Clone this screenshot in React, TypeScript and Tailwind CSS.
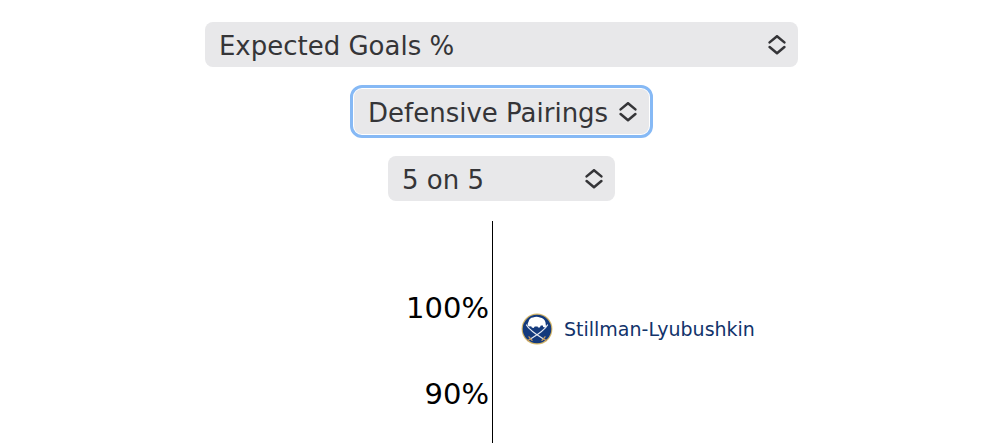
import { useState } from 'react';

type FilterProps = {
    label: string;
    options: string[];
    className: string;
};

const metrics = ['Expected Goals %', 'Goals %', 'Shot Attempts %'];
const groups = ['Defensive Pairings', 'Forward Lines'];
const strengths = ['5 on 5', 'All Situations'];
const ticks = ['100%', '90%'];

function Filter({ label, options, className }: FilterProps) {
    const [value, setValue] = useState(options[0]);

    return (
        <div className={`relative rounded-lg bg-[#e8e8ea] ${className}`}>
            <select
                aria-label={label}
                value={value}
                onChange={(e) => setValue(e.target.value)}
                className="block w-full h-[45px] pt-1 pl-[14px] pr-8 appearance-none rounded-lg bg-transparent text-[26px] text-[#353538] outline-none cursor-pointer"
            >
                {options.map((option) => (
                    <option key={option}>{option}</option>
                ))}
            </select>
            <svg
                viewBox="0 0 18 20"
                className="absolute right-3 top-[13px] w-[18px] h-5 pointer-events-none"
                fill="none"
                stroke="#353538"
                strokeWidth="2.5"
                strokeLinecap="round"
                strokeLinejoin="round"
            >
                <path d="M1.6 7.4 9 1.2l7.4 6.2M1.6 12 9 18.2l7.4-6.2" />
            </svg>
        </div>
    );
}

function SabresLogo() {
    return (
        <svg viewBox="0 0 32 32" className="w-8 h-8 shrink-0" aria-hidden="true">
            <circle cx="16" cy="16" r="15.4" fill="#d3b568" />
            <circle cx="16" cy="16" r="14.3" fill="#143a7c" />
            {/* Crossed sabres */}
            <g fill="none" strokeLinecap="round">
                <path d="M5.5 12Q8.5 17.5 22.5 26M26.5 12Q23.5 17.5 9.5 26" stroke="#e4e9f1" strokeWidth="1.3" />
                <path d="M21 27.4l3-3.6M11 27.4l-3-3.6M22.8 26l2.4 1.6M9.2 26l-2.4 1.6" stroke="#c39a62" strokeWidth="1.3" />
            </g>
            {/* Buffalo */}
            <path
                d="M7.6 8.6C8 6.2 9.8 4.8 12 4.6c2.2-1 4.8-1 7 0 2.6.4 4.8 2 5.4 4.4.4 1.6.2 3 .8 4.6l-1.4.8-1.6-.4-.4-1.6-2 .2-1 1.8-1.8.2-.4-1.2-2.8.2-1.2 1.4-1.8-.4-.6-1.4-1.8.4-1.4-.8-.4-1.8z"
                fill="#ffffff"
            />
        </svg>
    );
}

export default function App() {
    return (
        <main className="flex flex-col min-h-screen overflow-hidden bg-white font-['DejaVu_Sans',Verdana,sans-serif]">
            {/* Filters */}
            <div className="flex flex-col items-center gap-[22px] pt-[22px] pl-[3px]">
                <Filter label="Metric" options={metrics} className="w-[59.5%]" />
                <Filter
                    label="Player group"
                    options={groups}
                    className="w-[295px] outline-3 outline-offset-1 outline-[#86b9f5]"
                />
                <Filter label="Strength" options={strengths} className="w-[227px]" />
            </div>

            {/* Chart */}
            <div className="flex flex-1 mt-5">
                <div className="flex flex-col gap-[43px] w-[49.3%] pt-[66px] pr-[3px] border-r border-black text-right text-[29px] leading-[43px] text-black">
                    {ticks.map((tick) => (
                        <span key={tick}>{tick}</span>
                    ))}
                </div>
                <div className="flex items-center self-start gap-[11px] pt-[92px] pl-7 text-[19px] text-[#12336b]">
                    <SabresLogo />
                    <span>Stillman-Lyubushkin</span>
                </div>
            </div>
        </main>
    );
}
